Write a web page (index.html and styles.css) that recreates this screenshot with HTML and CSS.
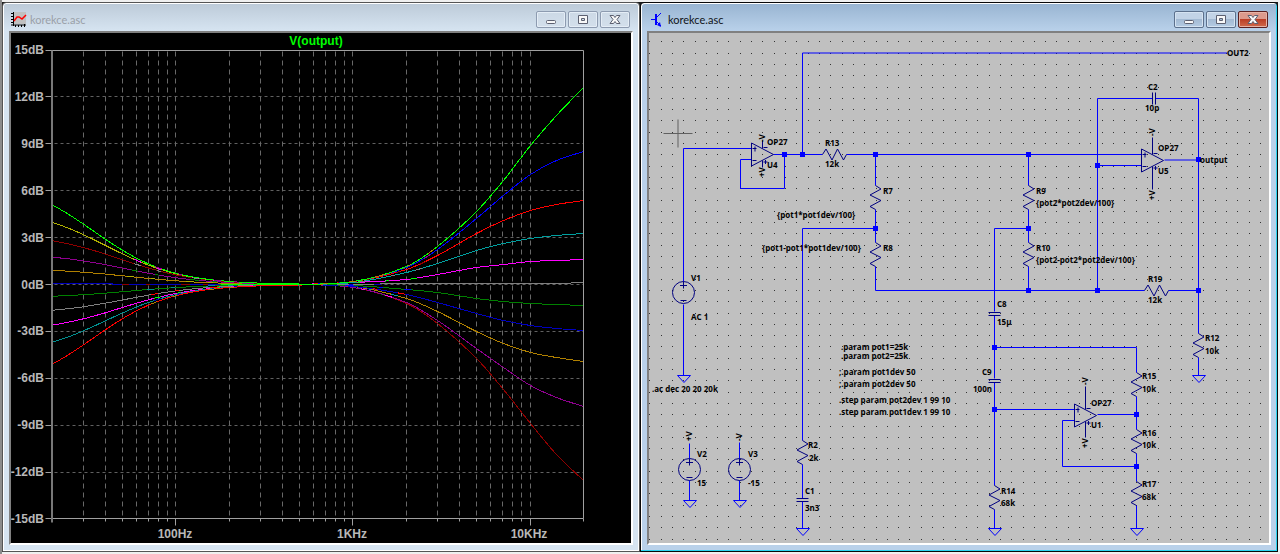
FILE: index.html
```html
<!DOCTYPE html>
<html lang="en">
<head>
<meta charset="utf-8">
<title>korekce.asc</title>
<link rel="stylesheet" href="styles.css">
</head>
<body>
<main class="desk">
  <section class="window" aria-label="Plot korekce.asc">
    <header class="titlebar">
      <svg class="app-icon" viewBox="0 0 16 16" aria-hidden="true">
        <rect x="3" y="0" width="12" height="12" fill="#c0c0c0"/>
        <path d="M2.500 0v14M0 1.500h3M0 4.500h3M0 7.500h3M0 10.500h3M0 13h15M4.500 13v2M7.500 13v2M10.500 13v2M13.500 12v3" stroke="#000" fill="none"/>
        <path d="M3 9l3-4h2l3 2 4-4" stroke="#f00" stroke-width="1.500" fill="none"/>
      </svg>
      <h1 class="title">korekce.asc</h1>
      <button class="win-btn" aria-label="Minimize"><svg viewBox="0 0 12 11"><rect x="1.500" y="6.500" width="9" height="3" rx="1" class="glyph"/></svg></button>
      <button class="win-btn" aria-label="Maximize"><svg viewBox="0 0 12 11"><path fill-rule="evenodd" d="M1.500 1.500h9v8h-9zM4.500 4.500h3v2h-3z" class="glyph"/></svg></button>
      <button class="win-btn" aria-label="Close"><svg viewBox="0 0 12 11"><path d="M1 1.500h3.500L6 3.500l1.500-2H11L8 5.500l3 4H7.500L6 7.500l-1.500 2H1l3-4z" class="glyph"/></svg></button>
    </header>
    <div class="client">
      <svg class="plot" viewBox="11 33 620 510" role="img" aria-label="V(output) frequency response">
        <g transform="translate(0.5 0.5)" fill="none">
          <g id="grid"></g>
          <g id="curves" shape-rendering="crispEdges"></g>
          <path class="axis" d="M45 50H583V518M45 518H583"/>
          <path class="axis-left" d="M51.500 50V522"/>
          <path id="ticks" class="axis"/>
        </g>
        <text class="trace" x="316" y="45">V(output)</text>
        <g class="ylab">
          <text x="44" y="54">15dB</text><text x="44" y="101">12dB</text><text x="44" y="148">9dB</text>
          <text x="44" y="195">6dB</text><text x="44" y="242">3dB</text><text x="44" y="289">0dB</text>
          <text x="44" y="335">-3dB</text><text x="44" y="382">-6dB</text><text x="44" y="429">-9dB</text>
          <text x="44" y="476">-12dB</text><text x="44" y="523">-15dB</text>
        </g>
        <g class="xlab">
          <text x="175" y="538">100Hz</text><text x="352" y="538">1KHz</text><text x="529" y="538">10KHz</text>
        </g>
      </svg>
    </div>
  </section>

  <section class="window active" aria-label="Schematic korekce.asc">
    <header class="titlebar">
      <svg class="app-icon" viewBox="0 0 16 16" aria-hidden="true">
        <path d="M2 7.500h5M12 1L7 6M7 9l5 5" stroke="#00f" fill="none"/>
        <path d="M6 2h2v11H6zM8 13l3-3 1 5z" fill="#00f"/>
      </svg>
      <h1 class="title">korekce.asc</h1>
      <button class="win-btn" aria-label="Minimize"><svg viewBox="0 0 12 11"><rect x="1.500" y="6.500" width="9" height="3" rx="1" class="glyph"/></svg></button>
      <button class="win-btn" aria-label="Maximize"><svg viewBox="0 0 12 11"><path fill-rule="evenodd" d="M1.500 1.500h9v8h-9zM4.500 4.500h3v2h-3z" class="glyph"/></svg></button>
      <button class="win-btn close" aria-label="Close"><svg viewBox="0 0 12 11"><path d="M1 1.500h3.500L6 3.500l1.500-2H11L8 5.500l3 4H7.500L6 7.500l-1.500 2H1l3-4z" class="glyph"/></svg></button>
    </header>
    <div class="client">
      <svg class="schematic" viewBox="649 33 620 510" role="img" aria-label="Tone control schematic">
        <defs>
          <path id="res" d="M0 0L5.500 3.500L-5.500 9.500L5.500 15L-5.500 21L0 24"/>
          <path id="cap" d="M-6 -1H6M-6 2H6"/>
          <path id="gnd" d="M-6 0H7L0.500 7Z"/>
          <g id="src"><circle r="11"/><path d="M0 -11V-4M-3.500 -7H3.500M-3 8H3"/></g>
          <path id="opamp" d="M0 -11.500V11.500L22 0ZM1 -6H5M3.500 -8V-3M1 6H5M11 -14V-6M11 6V13M12 -7H16M12 7.500H16M14 5.500V9.500"/>
        </defs>
        <path id="dots" fill="#333"/>
        <g transform="translate(0.5 0.5)" fill="none">
          <path class="cursor" d="M663 133H692M677.500 119V147"/>
          <g class="wire">
            <path d="M683 281V148H751M683 304V375"/>
            <path d="M1227 52.500H802V154M773 154H822M784 154V188H740V159H751M846 154H1141"/>
            <path d="M875 154V185M875 209V242M875 266V290H1144M875 228H802V440M802 464V498M802 501V528"/>
            <path d="M1028 154V185M1028 209V242M1028 266V290M1028 228H994V311M994 315V378M994 382V485M994 509V528"/>
            <path d="M1168 290H1198M1152 98H1097V290M1155 98H1198V333M1198 357V375M1097 165H1141M1164 159.500H1198"/>
            <path d="M994 347H1136V372M1136 396V429M1136 453V481M1136 505V528M994 409H1074M1097 414H1136M1074 420H1062V466H1136"/>
            <path d="M689 443V458M689 480V500M739 442V458M739 480V500"/>
            <use href="#gnd" x="683" y="375"/><use href="#gnd" x="689" y="500"/><use href="#gnd" x="739" y="500"/>
            <use href="#gnd" x="802" y="528"/><use href="#gnd" x="994" y="528"/><use href="#gnd" x="1136" y="528"/><use href="#gnd" x="1198" y="375"/>
          </g>
          <g class="part">
            <use href="#res" transform="translate(822 154) rotate(-90)"/>
            <use href="#res" transform="translate(1144 290) rotate(-90)"/>
            <use href="#res" x="875" y="185"/><use href="#res" x="875" y="242"/>
            <use href="#res" x="1028" y="185"/><use href="#res" x="1028" y="242"/>
            <use href="#res" x="1198" y="333"/><use href="#res" x="1136" y="372"/>
            <use href="#res" x="1136" y="429"/><use href="#res" x="1136" y="481"/>
            <use href="#res" x="994" y="485"/><use href="#res" x="802" y="440"/>
            <use href="#cap" x="994" y="313"/><use href="#cap" x="994" y="380"/><use href="#cap" x="802" y="499"/>
            <use href="#cap" transform="translate(1154 98) rotate(90)"/>
            <use href="#opamp" x="751" y="154"/><use href="#opamp" x="1141" y="160"/><use href="#opamp" x="1074" y="415"/>
            <path d="M1152 137V148M1152 172V189M1085 386V403M1085 426V437"/>
            <use href="#src" x="683" y="292"/><use href="#src" x="689" y="469"/><use href="#src" x="739" y="469"/>
          </g>
        </g>
        <path id="nodes" fill="#00f"/>
        <g class="label">
          <text x="767" y="145">OP27</text><text x="767" y="168">U4</text>
          <text x="825" y="146">R13</text><text x="825" y="167">12k</text>
          <text x="883" y="194">R7</text><text x="883" y="251">R8</text>
          <text x="777" y="218">{pot1*pot1dev/100}</text><text x="762" y="251">{pot1-pot1*pot1dev/100}</text>
          <text x="691" y="281">V1</text><text x="691" y="320">AC 1</text>
          <text x="652" y="392">.ac dec 20 20 20k</text>
          <text x="841" y="350">.param pot1=25k</text><text x="841" y="359">.param pot2=25k</text>
          <text x="839" y="375">;.param pot1dev 50</text><text x="839" y="387">;.param pot2dev 50</text>
          <text x="839" y="403">.step param pot2dev 1 99 10</text><text x="839" y="415">.step param pot1dev 1 99 10</text>
          <text x="697" y="457">V2</text><text x="697" y="486">15</text>
          <text x="748" y="457">V3</text><text x="748" y="486">-15</text>
          <text x="808" y="448">R2</text><text x="809" y="461">2k</text>
          <text x="805" y="494">C1</text><text x="805" y="511">3n3</text>
          <text x="1227" y="56">OUT2</text><text x="1148" y="90">C2</text><text x="1145" y="111">10p</text>
          <text x="1158" y="151">OP27</text><text x="1158" y="174">U5</text><text x="1200" y="163">output</text>
          <text x="1036" y="194">R9</text><text x="1036" y="206">{pot2*pot2dev/100}</text>
          <text x="1036" y="251">R10</text><text x="1036" y="263">{pot2-pot2*pot2dev/100}</text>
          <text x="997" y="307">C8</text><text x="997" y="325">15µ</text>
          <text x="1148" y="282">R19</text><text x="1148" y="303">12k</text>
          <text x="1205" y="341">R12</text><text x="1205" y="354">10k</text>
          <text x="982" y="375">C9</text><text x="973" y="392">100n</text>
          <text x="1091" y="406">OP27</text><text x="1091" y="428">U1</text>
          <text x="1142" y="379">R15</text><text x="1142" y="392">10k</text>
          <text x="1142" y="436">R16</text><text x="1142" y="448">10k</text>
          <text x="1142" y="487">R17</text><text x="1142" y="500">68k</text>
          <text x="1001" y="494">R14</text><text x="1001" y="506">68k</text>
          <text transform="translate(765 142) rotate(-90)">-V</text>
          <text transform="translate(765 177) rotate(-90)">+V</text>
          <text transform="translate(1155 136) rotate(-90)">-V</text>
          <text transform="translate(1155 200) rotate(-90)">+V</text>
          <text transform="translate(1088 385) rotate(-90)">-V</text>
          <text transform="translate(1088 448) rotate(-90)">+V</text>
          <text transform="translate(692 441) rotate(-90)">+V</text>
          <text transform="translate(742 441) rotate(-90)">-V</text>
        </g>
      </svg>
    </div>
  </section>
</main>
<script src="draw.js"></script>
</body>
</html>
```

FILE: draw.js
```js
const NS = 'http://www.w3.org/2000/svg';
const byId = (id) => document.getElementById(id);

function addPath(parent, d, cls, stroke, dash) {
  const p = document.createElementNS(NS, 'path');
  p.setAttribute('d', d);
  if (cls) p.setAttribute('class', cls);
  if (stroke) p.setAttribute('stroke', stroke);
  if (dash) p.setAttribute('stroke-dasharray', dash);
  parent.appendChild(p);
}

// Plot scales: 177px per decade, 15.63px per dB.
const fx = (f) => 175.3 + 177.1 * Math.log10(f / 100);
const dy = (db) => 284 - 15.63 * db;

// Grid
const grid = byId('grid');
for (let db = -12; db <= 12; db += 3) {
  const y = Math.round(dy(db));
  addPath(grid, `M54 ${y}H583`, 'grid-h');
  addPath(grid, `M45 ${y}H51`, 'axis');
}
let ticks = '';
for (const decade of [10, 100, 1000, 10000]) {
  for (let n = 1; n < 10; n++) {
    const f = decade * n;
    if (f <= 20 || f > 20000) continue;
    const x = Math.round(fx(f));
    if (f < 20000) addPath(grid, `M${x} 51V518`, 'grid-v');
    ticks += `M${x} 518V${n === 1 ? 525 : 521}`;
  }
}
byId('ticks').setAttribute('d', ticks);

// Curves
const curves = byId('curves');
const bass = [
  [0.05, 3000, '#0000c0'], [0.9, 3000, '#b08000'], [1.75, 2760, '#900090'],
  [2.8, 2327, '#900000'], [3.98, 1634, '#b0b000'],
  [-0.75, 3000, '#008000'], [-1.65, 2760, '#808080'], [-2.6, 2327, '#ff00ff'],
  [-3.7, 1634, '#009090'], [-5.1, 1179, '#ff0000'], [5.1, 1179, '#00ff00'],
];
bass.forEach(([g, a, color], i) => {
  let d = '';
  for (let x = 52; x <= 352; x += 3) {
    const f = 100 * Math.pow(10, (x - 175.3) / 177.1);
    const y = dy(g * (1 + 400 / a) / (1 + f * f / a));
    d += `${d ? 'L' : 'M'}${x} ${y.toFixed(1)}`;
  }
  addPath(curves, d, '', color);
  addPath(curves, d, '', bass[(i + 3) % bass.length][2], `0 ${70 + i * 5} 7 17 4 31 9 13 5 2000`);
});

const treble = [
  ['#808080', 284, 284, 284, 283, 283, 283, 283, 283, 283, 282],
  ['#900000', 284, 284, 287, 303, 323, 358, 389, 423, 454, 480],
  ['#900090', 284, 284, 287, 302, 320, 348, 367, 385, 397, 406],
  ['#b08000', 284, 284, 286, 298, 311, 331, 343, 352, 357, 361],
  ['#0000c0', 284, 284, 286, 294, 302, 313, 320, 325, 328, 330],
  ['#008000', 284, 284, 285, 289, 292, 298, 301, 303, 304, 305],
  ['#ff00ff', 284, 284, 282, 279, 274, 267, 264, 261, 260, 259],
  ['#00a0a0', 284, 284, 282, 272, 263, 250, 243, 238, 235, 233],
  ['#ff0000', 284, 284, 281, 269, 255, 233, 220, 210, 204, 200],
  ['#0000ff', 284, 284, 281, 267, 249, 218, 195, 174, 160, 151],
  ['#00ff00', 284, 284, 281, 266, 246, 211, 180, 145, 115, 87],
];
const xs = [220, 290, 353, 406, 437, 476, 503, 530, 556, 583];
treble.forEach(([color, ...ys], i) => {
  let d = `M${xs[0]} ${ys[0]}`;
  for (let k = 0; k < xs.length - 1; k++) {
    // Hermite segment with finite-difference slopes
    const slope = (j) => {
      const a = Math.max(j - 1, 0), b = Math.min(j + 1, xs.length - 1);
      return (ys[b] - ys[a]) / (xs[b] - xs[a]);
    };
    const h = (xs[k + 1] - xs[k]) / 3;
    d += `C${xs[k] + h} ${ys[k] + slope(k) * h} ${xs[k + 1] - h} ${ys[k + 1] - slope(k + 1) * h} ${xs[k + 1]} ${ys[k + 1]}`;
  }
  addPath(curves, d, '', color);
  addPath(curves, d, '', treble[(i + 4) % treble.length][0], `0 ${40 + i * 6} 8 22 6 19 9 25 4 21 7 2000`);
});

// Schematic snap points
let dots = '';
for (let r = 0; r <= 44; r++) {
  for (let c = 0; c <= 54; c++) {
    dots += `M${Math.round(649.3 + c * 11.31)} ${Math.round(41.3 + r * 11.3)}h1v1h-1z`;
  }
}
byId('dots').setAttribute('d', dots);

// Wire junctions
const junctions = [
  [784, 154], [802, 154], [875, 154], [1028, 154], [875, 228], [1028, 228],
  [1028, 290], [1097, 290], [1198, 290], [1097, 165], [1198, 159],
  [994, 347], [994, 409], [1136, 414], [1136, 466],
];
byId('nodes').setAttribute('d', junctions.map(([x, y]) => `M${x - 2} ${y - 2}h5v5h-5z`).join(''));
```

FILE: styles.css
```css
* {
  box-sizing: border-box;
}

body {
  margin: 0;
  padding: 2px 2px 2px 0;
  border-left: 2px solid #8c8c8c;
  background: #f0f0f0;
  font-family: "Open Sans", "Noto Sans", sans-serif;
}

.desk {
  display: grid;
  grid-template-columns: 1fr 1fr;
  background: #1c1c1c;
}

.window {
  display: flex;
  flex-direction: column;
  min-width: 0;
  padding: 1px 6px 6px;
  border: 1px solid #555;
  border-radius: 4px 4px 0 0;
  background: linear-gradient(#bccad8, #d6e4f1 28px);
  box-shadow: inset 0 0 0 1px #fff;
}

.window.active {
  border-color: #0a0a0a;
  background: linear-gradient(#98b4d1, #b9d1ea 28px);
  box-shadow: inset -1px -1px 0 #2ad4f0, inset 1px 1px 0 #fff;
}

.titlebar {
  display: flex;
  align-items: center;
  gap: 2px;
  height: 27px;
  padding: 4px 3px 0 2px;
}

.app-icon {
  width: 16px;
  height: 16px;
}

.title {
  flex: 1;
  margin: 0 0 0 1px;
  font-family: Lato, "Open Sans", sans-serif;
  font-size: 11px;
  font-weight: 400;
  line-height: 16px;
  color: #9aa0a8;
}

.active .title {
  color: #101418;
}

.win-btn {
  display: grid;
  place-items: center;
  width: 30px;
  height: 17px;
  padding: 0;
  border: 1px solid #8d9bb0;
  border-radius: 2px;
  background: linear-gradient(#ccd9e6, #d3dfeb);
  box-shadow: inset 0 0 0 1px #e4edf6;
}

.win-btn svg {
  width: 12px;
  height: 11px;
}

.glyph {
  fill: #f8f8f8;
  stroke: #5c6070;
}

.active .win-btn {
  border-color: #5c708c;
  background: linear-gradient(#c2d3e6 50%, #a3bad3 50%, #b4cbe3);
  box-shadow: inset 0 0 0 1px #d5e3f1;
}

.active .close {
  border-color: #5a2020;
  background: linear-gradient(#dc9a8c 50%, #bb3f26 50%, #cf6a4c);
  box-shadow: inset 0 0 0 1px #e6b3a6;
}

.client {
  border: 2px solid;
  border-color: #808080 #fff #fff #808080;
}

.plot,
.schematic {
  display: block;
  width: 100%;
  height: auto;
}

.plot {
  background: #000;
}

.plot text {
  font: bold 12px "Liberation Sans", Arial, sans-serif;
  fill: #b8b8b8;
}

.plot .trace {
  fill: #00ff00;
  text-anchor: middle;
}

.ylab {
  text-anchor: end;
}

.xlab {
  text-anchor: middle;
}

.axis {
  stroke: #a0a0a0;
}

.axis-left {
  stroke: #787878;
  stroke-width: 2;
}

.grid-h {
  stroke: #606060;
  stroke-dasharray: 3 3;
}

.grid-v {
  stroke: #686868;
  stroke-dasharray: 5 4;
}

.schematic {
  background: #c0c0c0;
}

.wire {
  stroke: #0000ff;
}

.part {
  stroke: #000080;
}

.cursor {
  stroke: #606060;
}

.label text {
  font: bold 8px "Open Sans", "Noto Sans", sans-serif;
  fill: #000;
}
```
